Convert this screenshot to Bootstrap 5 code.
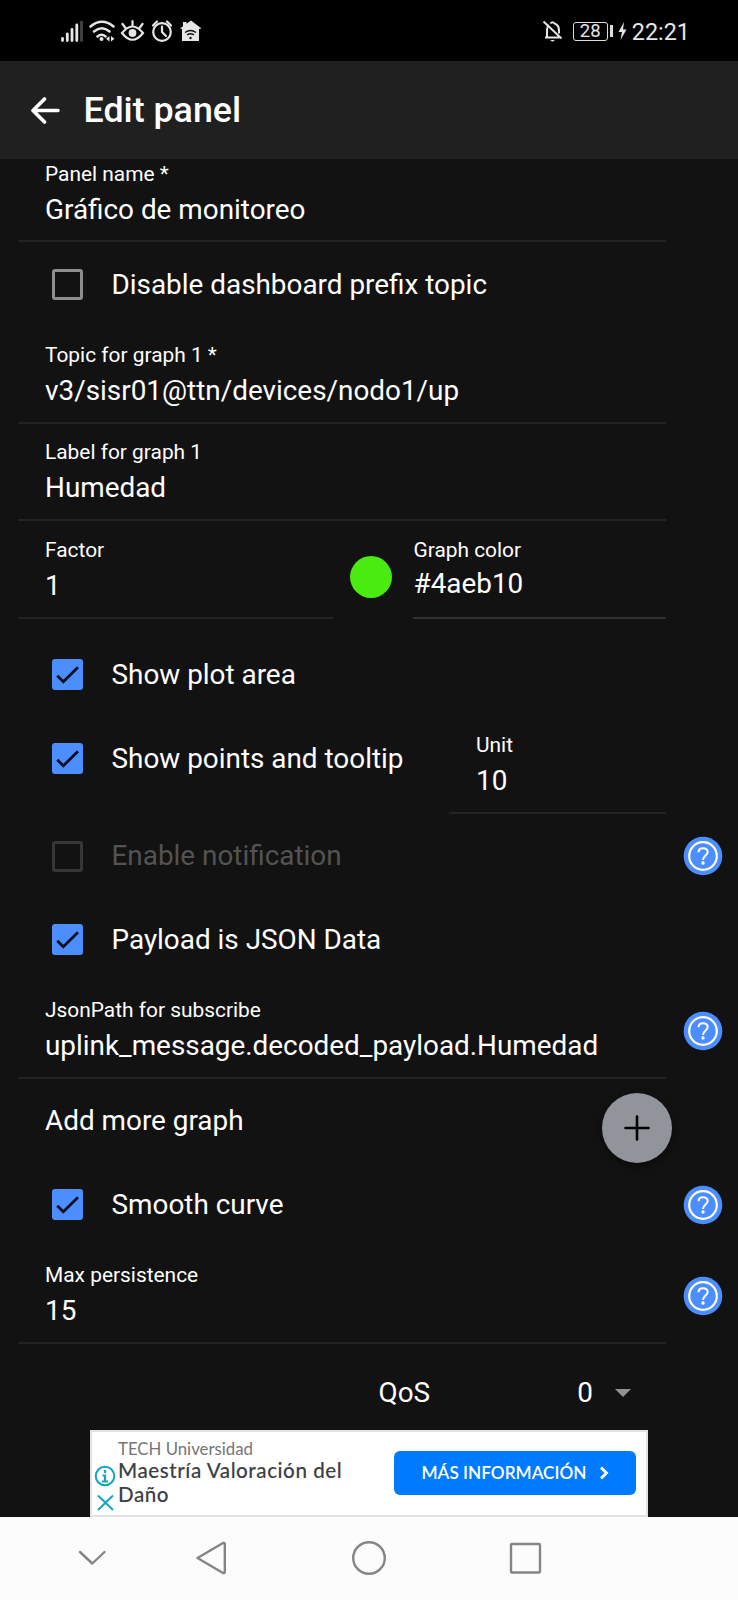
<!DOCTYPE html>
<html lang="en">
<head>
<meta charset="utf-8">
<meta name="viewport" content="width=device-width, initial-scale=1">
<title>Edit panel</title>
<link href="https://cdn.jsdelivr.net/npm/bootstrap@5.3.0/dist/css/bootstrap.min.css" rel="stylesheet">
<style>
  body { background: #121212; color: #fff; font-family: Roboto, "Liberation Sans", sans-serif; font-size: 27.88px; line-height: 34px; width: 738px; overflow: hidden; }
  svg { display: block; flex: none; }
  .status-bar { height: 61px; background: #000; color: #e6e6e6; padding: 1px 48px 0 60px; }
  .battery-box { width: 35px; height: 19px; border: 1.4px solid #ddd; border-radius: 3px; font-size: 18.5px; line-height: 17px; }
  .battery-tip { width: 3px; height: 12px; background: #ddd; margin: 0 5px 0 2px; }
  .clock { font-size: 23.4px; line-height: 28px; padding-top: 1px; }
  .app-bar { height: 98px; background: #202020; padding: 0 30px; }
  .app-title { font-size: 35.8px; line-height: 40px; font-weight: 500; margin-left: 22.5px; }
  .form-area { height: 1271px; padding-left: 18px; padding-right: 16px; }
  .main-col { width: 648px; }
  .field { height: 97px; padding: 0 27px 14px; border-bottom: 2px solid #232323; }
  .field-label { font-size: 20.9px; line-height: 28px; margin-bottom: 5px; }
  .field-name { height: 83px; padding-bottom: 13px; }
  .field-bright { border-color: #313131; padding-left: 0.5px; }
  .field-bright .field-value { position: relative; top: -2px; }
  .check-row { height: 84px; padding-left: 34px; }
  .check-row .form-check-input { width: 31px; height: 31px; margin: 0 28.5px 0 0; border: 3px solid #8e8e8e; border-radius: 3px; background-color: transparent; flex: none; opacity: 1; }
  .check-row .form-check-input:checked { border: 0; margin-bottom: 1px; background-color: #4c8dff; background-size: 31px 31px;
    background-image: url("data:image/svg+xml,%3csvg xmlns='http://www.w3.org/2000/svg' viewBox='0 0 31 31'%3e%3cpath d='M5.3 16.8l6 6L26 8.200' fill='none' stroke='%23071022' stroke-width='2.8'/%3e%3c/svg%3e"); }
  .check-row .form-check-input:disabled { border-color: #363636; }
  .check-row .form-check-input:disabled + label { color: #535353; opacity: 1; }
  .swatch { width: 42px; height: 42px; background: #4aeb10; margin: 35px 21px 0 17px; }
  .fab { width: 70px; height: 70px; background: #92949c; box-shadow: 0 3px 8px rgba(0,0,0,.5); margin-right: -6px; }
  .help { margin-right: -.5px; }
  .ad { width: 558px; height: 87px; background: #fff; border: 2px solid #e2e2e2; margin-left: 90px; font-family: Lato, "Open Sans", sans-serif; }
  .ad-brand { color: #757575; font-size: 16.8px; line-height: 18px; }
  .ad-title { color: #3c4043; font-size: 20.6px; line-height: 24px; font-weight: 500; width: 250px; letter-spacing: .55px; -webkit-text-stroke: .1px #3c4043; }
  .btn.ad-cta { width: 242px; height: 44px; background: #007bff; color: #fff; border: 0; border-radius: 6px; font-size: 17.2px; font-weight: 600; padding: 0; margin: 19px 10px 0 0; }
  .system-nav { height: 83px; background: #fcfcfc; }
</style>
</head>
<body>
<svg class="d-none">
  <symbol id="help-icon" viewBox="0 0 40 40">
    <circle cx="20" cy="20" r="19.3" fill="#4c8dff"/>
    <circle cx="20" cy="20" r="13.8" fill="none" stroke="#fff" stroke-width="2.200"/>
    <path d="M15.500 16.200c0-5.300 9.200-5.300 9.200-.3 0 3.500-4.700 3.700-4.700 8" fill="none" stroke="#fff" stroke-width="2"/>
    <circle cx="20" cy="27" r="1.700" fill="#fff"/>
  </symbol>
</svg>

<header>
  <div class="status-bar d-flex align-items-center">
    <svg width="144" height="24" viewBox="60 19 144 24" fill="none" stroke="#e6e6e6" stroke-width="2.200">
      <path d="M62.500 40.500v-2M67.300 40.500v-6.500M72 40.500V29.500M76.800 40.500V25" stroke-width="2.800" stroke-linecap="round"/>
      <path d="M81.500 41.500V21" stroke="#444" stroke-width="2.800"/>
      <path d="M90.500 26.500q11.500-9.500 23 0M94 31.500q8-6.500 15.500 0M97.500 36.500q4-3.500 8 0" stroke-width="2.500" stroke-linecap="round"/>
      <circle cx="101.500" cy="39" r="2" fill="#e6e6e6" stroke="none"/>
      <path d="M109.500 36v5.500l-3.500-2.700zM111 36v5.500l3.500-2.700z" fill="#e6e6e6" stroke="none"/>
      <path d="M122 33q10.500-13 21 0-10.500 13.500-21 0zM132.500 26v-5M125.500 28l-3-4M139.500 28l3-4" stroke-linecap="round"/>
      <circle cx="132.500" cy="33" r="3.900" fill="#e6e6e6" stroke="none"/>
      <circle cx="162" cy="32" r="8.800"/>
      <path d="M162 26.500V32l4 4M153 25.500l4-4M171 25.500l-4-4" stroke-linecap="round"/>
      <path d="M180 28.500l3-2.300V22h3.500v1.800L191 20.500l10.500 8-2.500.5v12h-17V29z" fill="#e6e6e6" stroke="none"/>
      <path d="M185 32.500q5.500-4 11 0M187 35q3.500-2.600 7 0" stroke="#111" stroke-width="1.500"/>
      <circle cx="190.500" cy="38" r="1.200" fill="#111" stroke="none"/>
    </svg>
    <div class="d-flex align-items-center ms-auto">
      <svg width="22" height="24" viewBox="543 19 22 24" fill="none" stroke="#e6e6e6" stroke-width="2" style="margin-right:9px">
        <path d="M546 37.500h14.500M548 37.500v-8q0-3 2-4.500M551.500 23.500q2-2.500 4 0 4.500 1.500 4.500 7v3M544.500 21.500l18 17"/>
        <path d="M551 40h5l-2.500 1.800z" fill="#e6e6e6" stroke="none"/>
      </svg>
      <div class="battery-box text-center">28</div>
      <div class="battery-tip"></div>
      <svg width="9" height="18" viewBox="0 0 9 18"><path d="M6 0L.5 10H4L2.500 18 8.500 7.500H5z" fill="#e6e6e6"/></svg>
      <div class="clock" style="margin-left:5px">22:21</div>
    </div>
  </div>
  <div class="app-bar d-flex align-items-center">
    <svg width="31" height="28" viewBox="0 0 31 28" fill="none" stroke="#fff" stroke-width="3.600" stroke-linecap="round" stroke-linejoin="round"><path d="M14.500 3L3 14.500 14.500 26M3.500 14.500H28"/></svg>
    <h1 class="app-title mb-0">Edit panel</h1>
  </div>
</header>

<main class="form-area">
  <div class="main-col field field-name d-flex flex-column justify-content-end">
    <div class="field-label">Panel name *</div><div class="field-value">Gráfico de monitoreo</div>
  </div>
  <div class="check-row d-flex align-items-center" style="height:85px">
    <input class="form-check-input" type="checkbox" id="prefix"><label for="prefix">Disable dashboard prefix topic</label>
  </div>
  <div class="main-col field d-flex flex-column justify-content-end">
    <div class="field-label">Topic for graph 1 *</div><div class="field-value">v3/sisr01@ttn/devices/nodo1/up</div>
  </div>
  <div class="main-col field d-flex flex-column justify-content-end">
    <div class="field-label">Label for graph 1</div><div class="field-value">Humedad</div>
  </div>
  <div class="main-col d-flex" style="height:98px">
    <div class="field h-100 d-flex flex-column justify-content-end" style="width:315px">
      <div class="field-label">Factor</div><div class="field-value">1</div>
    </div>
    <div class="swatch rounded-circle"></div>
    <div class="field field-bright h-100 flex-grow-1 d-flex flex-column justify-content-end">
      <div class="field-label">Graph color</div><div class="field-value">#4aeb10</div>
    </div>
  </div>
  <div class="check-row d-flex align-items-center" style="margin-top:14px">
    <input class="form-check-input" type="checkbox" id="plot" checked><label for="plot">Show plot area</label>
  </div>
  <div class="main-col d-flex justify-content-between">
    <div class="check-row d-flex align-items-center">
      <input class="form-check-input" type="checkbox" id="points" checked><label for="points">Show points and tooltip</label>
    </div>
    <div class="field d-flex flex-column justify-content-end" style="width:217px">
      <div class="field-label">Unit</div><div class="field-value">10</div>
    </div>
  </div>
  <div class="check-row d-flex align-items-center">
    <input class="form-check-input" type="checkbox" id="notify" disabled><label for="notify">Enable notification</label>
    <svg class="help ms-auto" width="40" height="40"><use href="#help-icon"/></svg>
  </div>
  <div class="check-row d-flex align-items-center">
    <input class="form-check-input" type="checkbox" id="json" checked><label for="json">Payload is JSON Data</label>
  </div>
  <div class="d-flex align-items-center justify-content-between">
    <div class="main-col field d-flex flex-column justify-content-end">
      <div class="field-label">JsonPath for subscribe</div><div class="field-value">uplink_message.decoded_payload.Humedad</div>
    </div>
    <svg class="help" width="40" height="40"><use href="#help-icon"/></svg>
  </div>
  <div class="main-col d-flex align-items-end justify-content-between" style="height:84px">
    <div style="padding:0 0 25px 27px">Add more graph</div>
    <div class="fab rounded-circle d-flex align-items-center justify-content-center">
      <svg width="26" height="26" viewBox="0 0 26 26" stroke="#000" stroke-width="2.600" stroke-linecap="round"><path d="M13 1.500v23M1.500 13h23"/></svg>
    </div>
  </div>
  <div class="check-row d-flex align-items-center">
    <input class="form-check-input" type="checkbox" id="smooth" checked><label for="smooth">Smooth curve</label>
    <svg class="help ms-auto" width="40" height="40"><use href="#help-icon"/></svg>
  </div>
  <div class="d-flex align-items-center justify-content-between">
    <div class="main-col field d-flex flex-column justify-content-end">
      <div class="field-label">Max persistence</div><div class="field-value">15</div>
    </div>
    <svg class="help" width="40" height="40"><use href="#help-icon"/></svg>
  </div>
  <div class="main-col d-flex align-items-center" style="height:86px;padding:11px 35px 0 360.5px">
    <div>QoS</div>
    <div class="ms-auto">0</div>
    <svg style="margin-left:22px" width="16" height="8" viewBox="0 0 16 8"><path d="M0 0h16L8 8z" fill="#929292"/></svg>
  </div>
</main>

<section class="ad d-flex">
  <svg class="mt-auto" width="26" height="51" viewBox="92 1463 26 51" fill="none" stroke="#14a5be" stroke-width="2">
    <circle cx="105" cy="1475" r="9.300"/><path d="M105 1473.500v7M105 1469v3M102.500 1474.500h2.500M102 1480.500h6" stroke-width="2.200"/>
    <path d="M98 1494.500l15 14.500M113 1494.500l-15 14.500"/>
  </svg>
  <div style="padding-top:8px">
    <div class="ad-brand">TECH Universidad</div>
    <div class="ad-title">Maestría Valoración del Daño</div>
  </div>
  <button class="btn ad-cta ms-auto d-flex align-items-center justify-content-center" type="button">MÁS INFORMACIÓN
    <svg style="margin-left:12px" width="10" height="14" viewBox="0 0 10 14" fill="none" stroke="#fff" stroke-width="2.800"><path d="M2 1.500L7.500 7 2 12.500"/></svg>
  </button>
</section>

<nav class="system-nav">
  <svg width="738" height="83" viewBox="0 1517 738 83" fill="none" stroke="#858585" stroke-width="2.400" stroke-linejoin="round" stroke-linecap="round">
    <path d="M80 1552l12.300 11.500L104.500 1552"/>
    <path d="M197.500 1558L223 1543q1.800-.5 1.800 1v28q0 1.500-1.800 1z"/>
    <circle cx="369" cy="1558" r="15.800"/>
    <rect x="511" y="1544" width="29" height="28.500" rx="1"/>
  </svg>
</nav>
<script src="https://cdn.jsdelivr.net/npm/bootstrap@5.3.0/dist/js/bootstrap.bundle.min.js"></script>
</body>
</html>
